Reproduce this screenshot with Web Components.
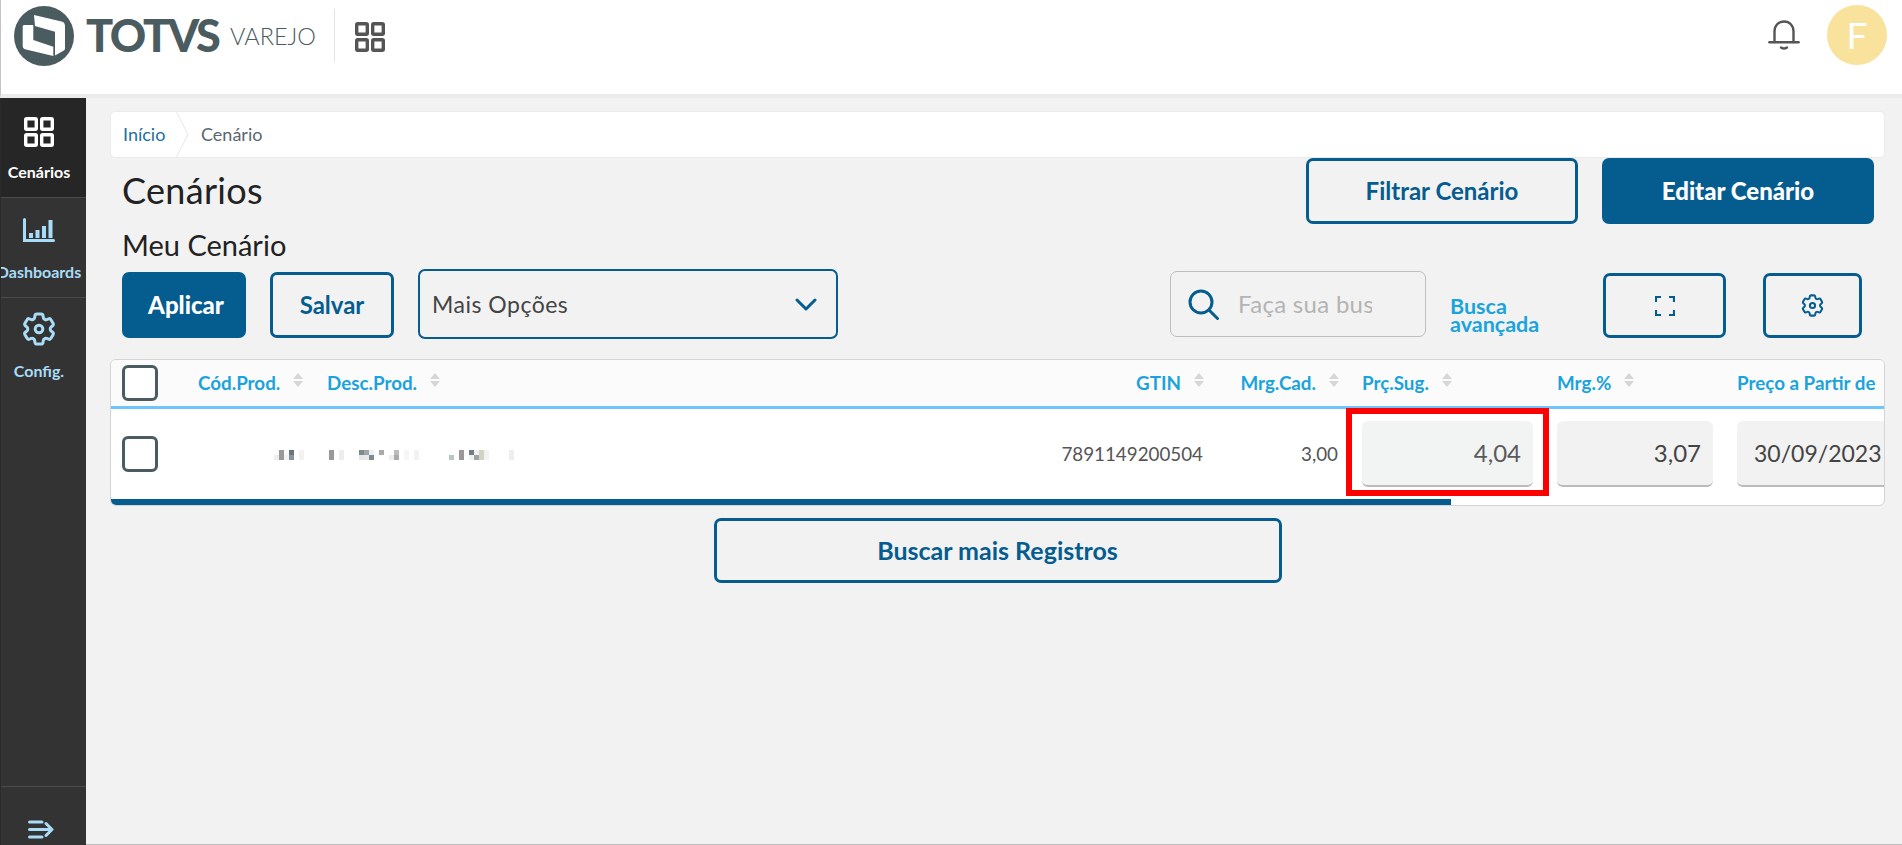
<!DOCTYPE html>
<html lang="pt-BR">
<head>
<meta charset="utf-8">
<title>TOTVS Varejo</title>
<style>
  html, body { margin: 0; height: 100%; background: #f2f2f2; }
  body { font-family: "Lato", "Liberation Sans", sans-serif; overflow: hidden; }
</style>
</head>
<body>
<varejo-app></varejo-app>

<script>
const BLUE = '#055c8f';
const GEAR = 'M9.594 3.94c.09-.542.56-.94 1.11-.94h2.593c.55 0 1.02.398 1.11.94l.213 1.281c.063.374.313.686.645.87.074.04.147.083.22.127.325.196.72.257 1.075.124l1.217-.456a1.125 1.125 0 0 1 1.37.49l1.296 2.247a1.125 1.125 0 0 1-.26 1.431l-1.003.827c-.293.241-.438.613-.43.992a7.723 7.723 0 0 1 0 .255c-.008.378.137.75.43.991l1.004.827c.424.35.534.955.26 1.43l-1.298 2.247a1.125 1.125 0 0 1-1.369.491l-1.217-.456c-.355-.133-.75-.072-1.076.124a6.47 6.47 0 0 1-.22.128c-.331.183-.581.495-.644.869l-.213 1.281c-.09.543-.56.94-1.11.94h-2.594c-.55 0-1.019-.398-1.11-.94l-.213-1.281c-.062-.374-.312-.686-.644-.87a6.52 6.52 0 0 1-.22-.127c-.325-.196-.72-.257-1.076-.124l-1.217.456a1.125 1.125 0 0 1-1.369-.49l-1.297-2.247a1.125 1.125 0 0 1 .26-1.431l1.004-.827c.292-.24.437-.613.43-.991a6.932 6.932 0 0 1 0-.255c.007-.38-.138-.751-.43-.992l-1.004-.827a1.125 1.125 0 0 1-.26-1.43l1.297-2.247a1.125 1.125 0 0 1 1.37-.491l1.216.456c.356.133.751.072 1.076-.124.072-.044.146-.086.22-.128.332-.183.582-.495.644-.869l.214-1.28Z';
const GRID = '<rect x="1.7" y="1.7" width="10.6" height="10.6" rx="1"/><rect x="17.7" y="1.7" width="10.6" height="10.6" rx="1"/><rect x="1.7" y="17.7" width="10.6" height="10.6" rx="1"/><rect x="17.7" y="17.7" width="10.6" height="10.6" rx="1"/>';

// Small base class, so each element only has to say what its shadow root holds
class ShadowElement extends HTMLElement {
  constructor() {
    super();
    this.attachShadow({ mode: 'open' });
  }
  connectedCallback() {
    this.shadowRoot.innerHTML = this.render();
  }
}

class VarejoHeader extends ShadowElement {
  render() {
    return `
      <style>
        :host { display: flex; align-items: flex-start; height: 94px; box-sizing: content-box; background: #fff;
                border-left: 1px solid #c4c4c4; border-bottom: 4px solid #ebebeb; padding-left: 13px; }
        .logo { width: 60px; height: 60px; margin-top: 6px; flex: none; }
        .brand { font: 900 45px/1 "Lato", sans-serif; color: #4b5c60; margin: 13px 0 0 12px; letter-spacing: -2.4px; width: 133px; }
        .sub { font: 300 23.5px/1 "Lato", sans-serif; color: #4b5c60; margin: 25px 0 0 11px; width: 87px; }
        .sep { width: 1px; height: 53px; background: #e4e4e4; margin: 9px 20px 0 17px; }
        .grid { width: 30px; height: 30px; margin-top: 22px; fill: none; stroke: #555; stroke-width: 3.4; }
        .right { margin-left: auto; display: flex; padding-right: 15px; }
        .bell { width: 32px; height: 32px; margin: 19px 27px 0 0; }
        .avatar { width: 60px; height: 60px; margin-top: 5px; border-radius: 50%; background: #f9e29c; color: #fff;
                  font: 400 37px/60px "Lato", sans-serif; text-align: center; }
      </style>
      <svg class="logo" viewBox="0 0 60 60">
        <circle cx="30" cy="30" r="30" fill="#4b5c60"/>
        <path fill="#fff" d="M20 9 47.500 15.400Q51 16.300 51 20V42.500Q51 44 49.500 44.800L41 49.500V25.700L21 20Z"/>
        <path fill="#fff" d="M10 19H19.300V34L39.300 40.700V50L12 43.600Q8.700 42.800 8.700 40V20.500Q8.700 19 10 19Z"/>
      </svg>
      <div class="brand">TOTVS</div>
      <div class="sub">VAREJO</div>
      <div class="sep"></div>
      <svg class="grid" viewBox="0 0 30 30">${GRID}</svg>
      <div class="right">
        <svg class="bell" viewBox="0 0 32 32" fill="none" stroke="#555" stroke-width="2.4" stroke-linecap="round">
          <path d="M6.500 23V12.500C6.500 6.500 10.500 2.500 16 2.500S25.500 6.500 25.500 12.500V23"/>
          <path d="M1.500 23.200H30.500" stroke-width="2.600"/>
          <path d="M13 28.500Q16 30.500 19 28.500"/>
        </svg>
        <div class="avatar">F</div>
      </div>`;
  }
}

class NavItem extends ShadowElement {
  render() {
    return `
      <style>
        :host { display: flex; flex-direction: column; align-items: center; height: 99px; box-sizing: content-box; padding-right: 9px;
                border-bottom: 1px solid #4a4a4a; color: #a9dcf6; font: 700 16px/18px "Lato", sans-serif; white-space: nowrap; overflow: hidden; }
        :host([active]) { background: #262626; color: #fff; }
        :host([last]) { border-bottom: 0; }
        .icon { height: 32px; margin-top: var(--icon-top, 17px); display: flex; justify-content: center; }
        .label { margin-top: var(--label-gap, 15px); }
      </style>
      <div class="icon"><slot name="icon"></slot></div>
      <div class="label"><slot></slot></div>`;
  }
}

class SideNav extends ShadowElement {
  render() {
    return `
      <style>
        :host { display: flex; flex-direction: column; width: 86px; background: #333; border-left: 1px solid #2a2a2a; box-sizing: border-box; flex: none; }
        .spacer { flex: 1; }
        .foot { height: 25px; border-top: 1px solid #4a4a4a; display: flex; justify-content: center; padding: 33px 5px 0 0; }
      </style>
      <slot></slot>
      <div class="spacer"></div>
      <div class="foot">
        <svg width="26" height="19" viewBox="0 0 26 19" fill="none" stroke="#a9dcf6" stroke-width="3" stroke-linecap="round" stroke-linejoin="round">
          <path d="M1.500 2H14M1.500 9.500H23M1.500 17H14M18 3.500 24 9.500 18 15.500"/>
        </svg>
      </div>`;
  }
}

class BreadCrumb extends ShadowElement {
  render() {
    return `
      <style>
        :host { display: flex; align-items: center; height: 47px; box-sizing: border-box; background: #fff; border: 1px solid #ebebeb;
                border-radius: 5px; font: 400 18px/1 "Lato", sans-serif; color: #5b6770; padding: 0 0 1px 12px; }
        .link { color: #1f6f9c; width: 53px; }
        svg { width: 13px; height: 45px; flex: none; margin: 0 12px -1px 0; }
      </style>
      <span class="link">Início</span>
      <svg viewBox="0 0 13 45" fill="none" stroke="#e6e6e6"><path d="M.5 0 12 22.500 .5 45"/></svg>
      <span>Cenário</span>`;
  }
}

class PoButton extends ShadowElement {
  render() {
    return `
      <style>
        :host { display: inline-flex; align-items: center; justify-content: center; box-sizing: border-box; flex: none;
                width: var(--w, 124px); height: var(--h, 66px); border: 3px solid ${BLUE}; border-radius: 7px;
                color: ${BLUE}; background: transparent; font: 700 var(--fs, 24px)/1 "Lato", sans-serif; white-space: nowrap; }
        :host([primary]) { background: ${BLUE}; color: #fff; font-weight: 900; }
      </style>
      <slot></slot>`;
  }
}

class SelectBox extends ShadowElement {
  render() {
    return `
      <style>
        :host { display: flex; align-items: center; justify-content: space-between; box-sizing: border-box; width: 420px; height: 70px; flex: none;
                border: 2px solid ${BLUE}; border-radius: 7px; padding: 0 19px 0 12px; font: 400 23px/1 "Lato", sans-serif; color: #444; letter-spacing: .5px; }
      </style>
      <slot></slot>
      <svg width="22" height="13" viewBox="0 0 22 13" fill="none" stroke="${BLUE}" stroke-width="3" stroke-linecap="round" stroke-linejoin="round"><path d="M2 2 11 11 20 2"/></svg>`;
  }
}

class SearchBox extends ShadowElement {
  render() {
    return `
      <style>
        :host { display: flex; align-items: center; box-sizing: border-box; width: 256px; height: 66px; flex: none;
                border: 1px solid #bdbdbd; border-radius: 7px; padding-left: 17px; }
        .text { width: 134px; margin-left: 19px; overflow: hidden; white-space: nowrap; font: 400 24px/1.2 "Lato", sans-serif; color: #b4b4b4; letter-spacing: .3px; }
      </style>
      <svg width="31" height="31" viewBox="0 0 31 31" fill="none" stroke="${BLUE}" stroke-width="3" stroke-linecap="round"><circle cx="13" cy="13" r="11"/><path d="M21 21 29.500 29.500"/></svg>
      <div class="text">Faça sua busca</div>`;
  }
}

// One sortable column title: text plus the two grey triangles
class SortHead extends ShadowElement {
  render() {
    return `
      <style>
        :host { display: inline-flex; align-items: center; gap: 13px; font: 700 18.8px/1 "Lato", sans-serif; color: #1ba3dc; white-space: nowrap; }
        svg { margin-top: -6px; flex: none; }
      </style>
      <slot></slot>
      ${this.hasAttribute('nosort') ? '' : '<svg width="10" height="14" viewBox="0 0 10 14" fill="#d4d6d7"><path d="M5 0 10 6H0ZM0 8H10L5 14Z"/></svg>'}`;
  }
}

class CheckBox extends ShadowElement {
  render() {
    return `
      <style>
        :host { display: block; box-sizing: border-box; width: 36px; height: 36px; background: #fff; border: 3px solid #4b5c60; border-radius: 6px; }
      </style>`;
  }
}

class ValueInput extends ShadowElement {
  render() {
    return `
      <style>
        :host { display: flex; align-items: center; justify-content: flex-end; box-sizing: border-box; height: 66px; padding: 0 12px;
                background: #f2f2f2; border-bottom: 2px solid #bbb; border-radius: 6px; font: 400 24px/1 "Lato", sans-serif; color: #444; white-space: nowrap; position: relative; }
        :host([left]) { justify-content: flex-start; padding: 0 17px; font-size: 23px; }
        :host([flagged]) { background: #f2f3f3; color: #5a5a5a; }
        /* the red annotation box drawn over the screenshot */
        :host([flagged])::after { content: ""; position: absolute; inset: -13px -16px -11px -16px; border: 6px solid #f00; pointer-events: none; }
      </style>
      <slot></slot>`;
  }
}

// The pixelated (censored) product name from the screenshot
class BlurText extends ShadowElement {
  render() {
    const cells = [
      [0,1,'#eee'],[1,0,'#999'],[1,1,'#999'],[2,0,'#fafafa'],[2,1,'#f2f2f2'],[3,0,'#68757c'],[3,1,'#8a949a'],
      [5,0,'#f2f2f2'],[5,1,'#f2f2f2'],[11,0,'#999'],[11,1,'#999'],[13,0,'#eee'],[13,1,'#eee'],
      [17,0,'#7d8a92'],[17,1,'#e4e6e8'],[18,0,'#a0a4a6'],[18,1,'#e8e8ea'],[19,0,'#f0f0f0'],[19,1,'#7d8a92'],
      [21,0,'#aaa'],[23,1,'#eee'],[24,0,'#bbb'],[24,1,'#aaa'],[26,0,'#f6f6f6'],[26,1,'#f6f6f6'],[28,0,'#f2f2f2'],[28,1,'#f2f2f2'],
      [35,1,'#b8c6cc'],[37,0,'#999'],[37,1,'#999'],[39,0,'#707d85'],[39,1,'#f2f2f2'],[40,0,'#f0f0f0'],[40,1,'#a0a4a6'],
      [41,0,'#d2d2c4'],[41,1,'#d2d2c4'],[42,0,'#f2f2f2'],[42,1,'#f2f2f2'],[47,0,'#eee'],[47,1,'#eee']
    ];
    const rects = cells.map(c => `<rect x="${c[0] * 5}" y="${c[1] * 5}" width="5" height="5" fill="${c[2]}"/>`).join('');
    return `
      <style>:host { display: block; width: 240px; height: 10px; } svg { display: block; overflow: visible; }</style>
      <svg width="240" height="10" shape-rendering="crispEdges">${rects}</svg>`;
  }
}

class ScenarioTable extends ShadowElement {
  render() {
    return `
      <style>
        :host { display: block; height: 147px; box-sizing: border-box; background: #fff; border: 1px solid #d4d4d4; border-radius: 6px; overflow: hidden; position: relative; }
        .row { display: grid; grid-template-columns: 76px 129px 724px 176px 135px 195px 180px 158px; align-items: center; }
        .head { height: 46px; background: #fbfbfb; border-bottom: 3px solid #6cc5ff; }
        .body { height: 90px; }
        .cell { padding-left: 11px; min-width: 0; white-space: nowrap; }
        .end { padding: 0 12px 0 0; text-align: right; }
        .num { font: 400 18.8px/1 "Lato", sans-serif; color: #555; padding-right: 13px; }
        .body .cell.pad { padding-right: 13px; }
        .bar { height: 6px; width: 1340px; background: ${BLUE}; }
        blur-text { margin: 2px 0 0 76px; }
      </style>
      <div class="row head">
        <div class="cell"><check-box></check-box></div>
        <div class="cell"><sort-head>Cód.Prod.</sort-head></div>
        <div class="cell"><sort-head>Desc.Prod.</sort-head></div>
        <div class="cell end"><sort-head>GTIN</sort-head></div>
        <div class="cell end"><sort-head>Mrg.Cad.</sort-head></div>
        <div class="cell"><sort-head>Prç.Sug.</sort-head></div>
        <div class="cell"><sort-head>Mrg.%</sort-head></div>
        <div class="cell"><sort-head nosort>Preço a Partir de</sort-head></div>
      </div>
      <div class="row body">
        <div class="cell"><check-box></check-box></div>
        <div class="cell"><blur-text></blur-text></div>
        <div class="cell"></div>
        <div class="cell end num">7891149200504</div>
        <div class="cell end num">3,00</div>
        <div class="cell pad"><value-input flagged>4,04</value-input></div>
        <div class="cell pad"><value-input>3,07</value-input></div>
        <div class="cell"><value-input left style="width:160px">30/09/2023</value-input></div>
      </div>
      <div class="bar"></div>`;
  }
}

class VarejoApp extends ShadowElement {
  render() {
    return `
      <style>
        :host { display: flex; flex-direction: column; height: 845px; color: #222; }
        .columns { display: flex; flex: 1; min-height: 0; }
        main { flex: 1; min-width: 0; padding: 13px 17px 0 24px; border-bottom: 1px solid #bbb; box-sizing: border-box; }
        .top { display: flex; align-items: center; height: 66px; padding: 0 11px 0 12px; gap: 24px; }
        h1 { font: 400 36px/1 "Lato", sans-serif; margin: -3px auto 0 0; letter-spacing: .3px; }
        h2 { font: 400 29px/42px "Lato", sans-serif; margin: 0 0 3px; padding-left: 12px; }
        .tools { display: flex; align-items: center; height: 70px; padding: 0 23px 0 12px; gap: 24px; margin-bottom: 20px; }
        .tools po-button { margin-top: 2px; }
        .tools po-button.icons { margin-top: 3px; }
        .adv { font: 700 21.5px/18px "Lato", sans-serif; color: #1ba3dc; width: 129px; margin-top: 21px; }
        .push { margin-left: auto; }
        .icons { --h: 65px; }
        .more { display: flex; justify-content: center; margin-top: 12px; }
        .more po-button { --w: 568px; --h: 65px; --fs: 25px; }
        nav-item svg { display: block; flex: none; }
      </style>
      <varejo-header></varejo-header>
      <div class="columns">
        <side-nav>
          <nav-item active style="--icon-top:19px;--label-gap:14px">
            <svg slot="icon" width="30" height="30" viewBox="0 0 30 30" fill="none" stroke="#fff" stroke-width="3.4">${GRID}</svg>Cenários
          </nav-item>
          <nav-item style="--icon-top:20px;--label-gap:13px">
            <svg slot="icon" width="32" height="24" viewBox="0 0 32 24" fill="none" stroke="#a9dcf6" stroke-linecap="round">
              <path d="M1.500 1.500V22.500H30.500" stroke-width="3"/>
              <path d="M8 15V20M14.500 12V20M21 8V20M27.500 2V20" stroke-width="4" stroke-linecap="butt"/>
            </svg>Dashboards
          </nav-item>
          <nav-item last style="--icon-top:11px;--label-gap:21px">
            <svg slot="icon" width="40" height="40" viewBox="0 0 24 24" fill="none" stroke="#a9dcf6" stroke-width="1.800">
              <path d="${GEAR}"/><circle cx="12" cy="12" r="2.300"/>
            </svg>Config.
          </nav-item>
        </side-nav>
        <main>
          <bread-crumb></bread-crumb>
          <div class="top">
            <h1>Cenários</h1>
            <po-button style="--w:272px">Filtrar Cenário</po-button>
            <po-button primary style="--w:272px">Editar Cenário</po-button>
          </div>
          <h2>Meu Cenário</h2>
          <div class="tools">
            <po-button primary style="padding-left:4px">Aplicar</po-button>
            <po-button>Salvar</po-button>
            <select-box>Mais Opções</select-box>
            <search-box class="push"></search-box>
            <div class="adv">Busca<br>avançada</div>
            <po-button class="icons" style="--w:123px">
              <svg width="20" height="20" viewBox="0 0 20 20" fill="none" stroke="${BLUE}" stroke-width="2.200"><path d="M1 6V1H6M14 1H19V6M19 14V19H14M6 19H1V14"/></svg>
            </po-button>
            <po-button class="icons" style="--w:99px;margin-left:13px">
              <svg width="27" height="27" viewBox="0 0 24 24" fill="none" stroke="${BLUE}" stroke-width="1.800"><path d="${GEAR}"/><circle cx="12" cy="12" r="2.300"/></svg>
            </po-button>
          </div>
          <scenario-table></scenario-table>
          <div class="more"><po-button>Buscar mais Registros</po-button></div>
        </main>
      </div>`;
  }
}

customElements.define('varejo-header', VarejoHeader);
customElements.define('nav-item', NavItem);
customElements.define('side-nav', SideNav);
customElements.define('bread-crumb', BreadCrumb);
customElements.define('po-button', PoButton);
customElements.define('select-box', SelectBox);
customElements.define('search-box', SearchBox);
customElements.define('sort-head', SortHead);
customElements.define('check-box', CheckBox);
customElements.define('value-input', ValueInput);
customElements.define('blur-text', BlurText);
customElements.define('scenario-table', ScenarioTable);
customElements.define('varejo-app', VarejoApp);
</script>
</body>
</html>
